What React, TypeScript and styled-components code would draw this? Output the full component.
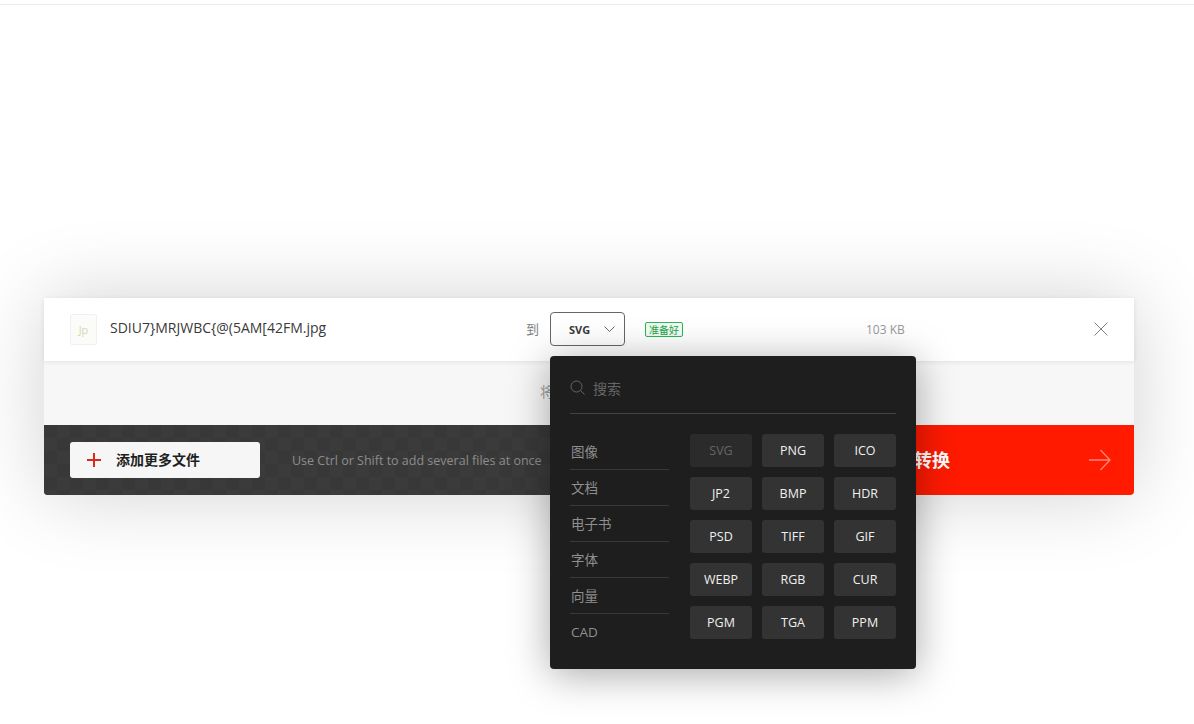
import React from 'react';
import styled, { createGlobalStyle } from 'styled-components';

const GlobalStyle = createGlobalStyle`
  html, body {
    margin: 0;
    padding: 0;
    height: 724px;
    overflow: hidden;
    background: #ffffff;
    font-family: "Open Sans", "Noto Sans CJK SC", sans-serif;
  }
`;

const TopBar = styled.div`
  height: 4px;
  border-bottom: 1px solid #ececec;
`;

const Page = styled.main`
  padding: 293px 60px 0 44px;
`;

const Card = styled.section`
  position: relative;
  width: 1090px;
  height: 197px;
  display: flex;
  flex-direction: column;
  background: #f7f7f7;
  border-radius: 0 0 4px 4px;
  box-shadow: 0 0 80px rgba(0, 0, 0, 0.18);
`;

const FileRow = styled.div`
  height: 63px;
  flex: none;
  box-sizing: border-box;
  display: flex;
  align-items: center;
  padding: 0 0 1px 26px;
  background: #ffffff;
  box-shadow: 0 1px 5px rgba(0, 0, 0, 0.09);
`;

const FileInfo = styled.div`
  width: 456px;
  flex: none;
  display: flex;
  align-items: center;
  gap: 13px;
`;

const FileIcon = styled.div`
  width: 27px;
  height: 31px;
  box-sizing: border-box;
  display: flex;
  align-items: center;
  justify-content: center;
  border: 1px solid #f0f0f0;
  border-radius: 2px;
  background: #fbfbf9;
  color: #d9d7ae;
  font-size: 11px;
`;

const FileName = styled.span`
  position: relative;
  top: -2px;
  font-size: 14px;
  color: #3a3a3a;
`;

const ToLabel = styled.span`
  width: 24px;
  flex: none;
  padding-bottom: 2px;
  font-size: 13px;
  color: #808080;
`;

const FormatSelect = styled.div`
  width: 75px;
  height: 34px;
  flex: none;
  box-sizing: border-box;
  display: flex;
  align-items: center;
  justify-content: space-between;
  padding: 0 9px 0 18px;
  border: 1px solid #666666;
  border-radius: 4px;
  color: #3a3a3a;
  font-size: 11px;
  font-weight: 700;
`;

const ReadyBadge = styled.span`
  width: 38px;
  height: 15px;
  flex: none;
  box-sizing: border-box;
  margin-left: 20px;
  display: flex;
  align-items: center;
  justify-content: center;
  border: 1px solid #2fb457;
  border-radius: 2px;
  background: #eefbf1;
  color: #23a24a;
  font-size: 10px;
`;

const FileSize = styled.span`
  width: 228px;
  flex: none;
  margin-left: 183px;
  font-size: 12px;
  color: #999999;
`;

const RemoveButton = styled.span`
  display: flex;
  color: #808080;
`;

const Note = styled.div`
  margin-top: 4px;
  padding-bottom: 8px;
  flex: 1;
  display: flex;
  align-items: center;
  justify-content: center;
  font-size: 14px;
  color: #a0a0a0;
`;

const ActionBar = styled.div`
  height: 70px;
  flex: none;
  display: flex;
  border-radius: 0 0 4px 4px;
  overflow: hidden;
`;

const AddArea = styled.div`
  flex: 1;
  display: flex;
  align-items: center;
  padding-left: 26px;
  background-color: #393939;
  background-image: conic-gradient(
    #3b3b3b 25%,
    #383838 0 50%,
    #3b3b3b 0 75%,
    #383838 0
  );
  background-size: 26px 26px;
`;

const AddButton = styled.div`
  width: 190px;
  height: 36px;
  flex: none;
  display: flex;
  align-items: center;
  gap: 15px;
  padding-left: 17px;
  box-sizing: border-box;
  background: #f6f6f6;
  border-radius: 3px;
  color: #1f1f1f;
  font-size: 14px;
  font-weight: 700;
`;

const ButtonLabel = styled.span`
  padding-bottom: 2px;
`;

const Hint = styled.span`
  margin-left: 32px;
  font-size: 12.5px;
  color: #8d8d8d;
  white-space: nowrap;
`;

const ConvertButton = styled.div`
  width: 274px;
  flex: none;
  box-sizing: border-box;
  display: flex;
  align-items: center;
  justify-content: space-between;
  padding: 0 23px 0 18px;
  background: #ff1a00;
  color: #ffffff;
  font-size: 18px;
  font-weight: 700;
`;

const ArrowIcon = styled.span`
  display: flex;
  color: #ff8a75;
`;

const Dropdown = styled.div`
  position: absolute;
  left: 506px;
  top: 58px;
  width: 366px;
  height: 313px;
  box-sizing: border-box;
  padding: 0 20px;
  background: #1e1e1e;
  border-radius: 4px;
  box-shadow: 0 5px 40px rgba(0, 0, 0, 0.35);
`;

const SearchRow = styled.div`
  height: 58px;
  box-sizing: border-box;
  display: flex;
  align-items: center;
  gap: 8px;
  padding-top: 6px;
  border-bottom: 1px solid #434343;
  color: #666666;
  font-size: 14px;
`;

const DropdownBody = styled.div`
  display: flex;
  justify-content: space-between;
  padding-top: 20px;
`;

const CategoryList = styled.ul`
  width: 99px;
  margin: 0;
  padding: 0;
  list-style: none;
`;

const CategoryItem = styled.li`
  height: 36px;
  box-sizing: border-box;
  display: flex;
  align-items: center;
  padding: 0 1px 2px;
  border-bottom: 1px solid #383838;
  color: #8f8f8f;
  font-size: 13.5px;

  &:last-child {
    padding-bottom: 0;
    border-bottom: none;
  }
`;

const FormatGrid = styled.div`
  width: 206px;
  display: grid;
  grid-template-columns: repeat(3, 62px);
  grid-auto-rows: 33px;
  gap: 10px;
`;

const FormatButton = styled.div<{ $current?: boolean }>`
  display: flex;
  align-items: center;
  justify-content: center;
  background: ${p => (p.$current ? '#2b2b2b' : '#333333')};
  border-radius: 3px;
  color: ${p => (p.$current ? '#666666' : '#f0f0f0')};
  font-size: 12.5px;
`;

const categories = ['图像', '文档', '电子书', '字体', '向量', 'CAD'];

const formats = [
  'SVG', 'PNG', 'ICO',
  'JP2', 'BMP', 'HDR',
  'PSD', 'TIFF', 'GIF',
  'WEBP', 'RGB', 'CUR',
  'PGM', 'TGA', 'PPM',
];

const fileName = 'SDIU7}MRJWBC{@(5AM[42FM.jpg';

const App: React.FC = () => {
  return (
    <>
      <GlobalStyle />
      <TopBar />
      <Page>
        <Card>
          <FileRow>
            <FileInfo>
              <FileIcon>Jp</FileIcon>
              <FileName>{fileName}</FileName>
            </FileInfo>
            <ToLabel>到</ToLabel>
            <FormatSelect>
              SVG
              <svg width="11" height="7" viewBox="0 0 11 7" fill="none" stroke="#666" strokeWidth="1">
                <path d="M0.5 0.5 L5.5 5.5 L10.5 0.5" />
              </svg>
            </FormatSelect>
            <ReadyBadge>准备好</ReadyBadge>
            <FileSize>103 KB</FileSize>
            <RemoveButton>
              <svg width="14" height="14" viewBox="0 0 14 14" fill="none" stroke="currentColor" strokeWidth="1">
                <path d="M0.5 0.5 L13.5 13.5 M13.5 0.5 L0.5 13.5" />
              </svg>
            </RemoveButton>
          </FileRow>
          <Note>将文件放到此处</Note>
          <ActionBar>
            <AddArea>
              <AddButton>
                <svg width="14" height="14" viewBox="0 0 14 14" fill="none" stroke="#d9281c" strokeWidth="2">
                  <path d="M7 0 V14 M0 7 H14" />
                </svg>
                <ButtonLabel>添加更多文件</ButtonLabel>
              </AddButton>
              <Hint>Use Ctrl or Shift to add several files at once</Hint>
            </AddArea>
            <ConvertButton>
              <ButtonLabel>开始转换</ButtonLabel>
              <ArrowIcon>
                <svg width="22" height="22" viewBox="0 0 22 22" fill="none" stroke="currentColor" strokeWidth="1.3">
                  <path d="M0 11 H21 M11.5 1 L21 11 L11.5 21" />
                </svg>
              </ArrowIcon>
            </ConvertButton>
          </ActionBar>
          <Dropdown>
            <SearchRow>
              <svg width="15" height="15" viewBox="0 0 15 15" fill="none" stroke="#666" strokeWidth="1">
                <circle cx="6.5" cy="6.5" r="5.5" />
                <path d="M10.5 10.5 L14.5 14.5" />
              </svg>
              搜索
            </SearchRow>
            <DropdownBody>
              <CategoryList>
                {categories.map(name => (
                  <CategoryItem key={name}>{name}</CategoryItem>
                ))}
              </CategoryList>
              <FormatGrid>
                {formats.map(name => (
                  <FormatButton key={name} $current={name === 'SVG'}>{name}</FormatButton>
                ))}
              </FormatGrid>
            </DropdownBody>
          </Dropdown>
        </Card>
      </Page>
    </>
  );
};

export default App;
